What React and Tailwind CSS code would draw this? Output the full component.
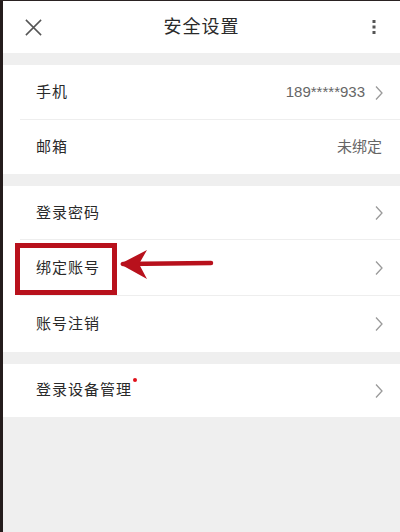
import React from 'react';

const font = { fontFamily: '"Liberation Sans", "Noto Sans CJK SC", sans-serif' };

function Chevron() {
  return (
    <svg width="10" height="16" viewBox="0 0 10 16" className="shrink-0">
      <path d="M2 1.5 L8 8 L2 14.5" fill="none" stroke="#9a9a9a" strokeWidth="1.3" />
    </svg>
  );
}

function Row({ label, value, chevron = true, dot = false, divider = false, height = 'h-[55px]' }) {
  return (
    <div className={`relative flex items-center ${height} pl-[33px] pr-[16px] bg-white`}>
      <span className="text-[15px] text-[#2a2a2a] tracking-[1px]">{label}</span>
      {dot && <span className="self-start mt-[14px] ml-[1px] w-[4px] h-[4px] rounded-full bg-[#e0101a]" />}
      <div className="flex-1" />
      {value && (
        <span className={`text-[15px] text-[#666] ${chevron ? 'mr-[9px]' : 'mr-[2px]'}`}>{value}</span>
      )}
      {chevron && <Chevron />}
      {divider && <div className="absolute left-[17px] right-0 bottom-0 h-px bg-[#eeeeee]" />}
    </div>
  );
}

export default function App() {
  return (
    <div className="w-[400px] h-[532px] bg-[#efefef] flex border-t border-[#2a2222] overflow-hidden" style={font}>
      <div className="w-[3px] bg-[#241c1c] shrink-0" />
      <div className="flex-1 flex flex-col relative">
        {/* Header */}
        <div className="h-[52px] bg-white flex items-center pl-[21px] pr-[23px]">
          <div className="w-[40px] flex">
            <svg width="19" height="19" viewBox="0 0 20 20">
              <path d="M2 2 L18 18 M18 2 L2 18" stroke="#555" strokeWidth="1.6" fill="none" />
            </svg>
          </div>
          <span className="flex-1 text-center text-[18px] text-[#2a2a2a] tracking-[1px] pl-[2px]">安全设置</span>
          <div className="w-[40px] flex justify-end">
            <svg width="6" height="16" viewBox="0 0 6 16">
              <rect x="1.5" y="1" width="3" height="3" fill="#555" />
              <rect x="1.5" y="6.5" width="3" height="3" fill="#555" />
              <rect x="1.5" y="12" width="3" height="3" fill="#555" />
            </svg>
          </div>
        </div>

        <div className="h-[12px]" />
        <Row label="手机" value="189*****933" divider />
        <Row label="邮箱" value="未绑定" chevron={false} height="h-[54px]" />

        <div className="h-[12px]" />
        <Row label="登录密码" divider height="h-[54px]" />
        <Row label="绑定账号" divider height="h-[56px]" />
        <Row label="账号注销" height="h-[56px]" />

        <div className="h-[12px]" />
        <Row label="登录设备管理" dot height="h-[53px]" />

        {/* Annotation: red box */}
        <div className="absolute left-[12px] top-[242px] w-[102px] h-[52px] border-[5px] border-[#b8111c]" />
        {/* Annotation: arrow */}
        <svg className="absolute left-[114px] top-[246px]" width="100" height="36" viewBox="0 0 100 36">
          <path d="M6 17 L94 16" stroke="#b8111c" strokeWidth="4.5" strokeLinecap="round" fill="none" />
          <path d="M3 17 L30 3 L22 17 L30 32 Z" fill="#b8111c" />
        </svg>
      </div>
    </div>
  );
}
